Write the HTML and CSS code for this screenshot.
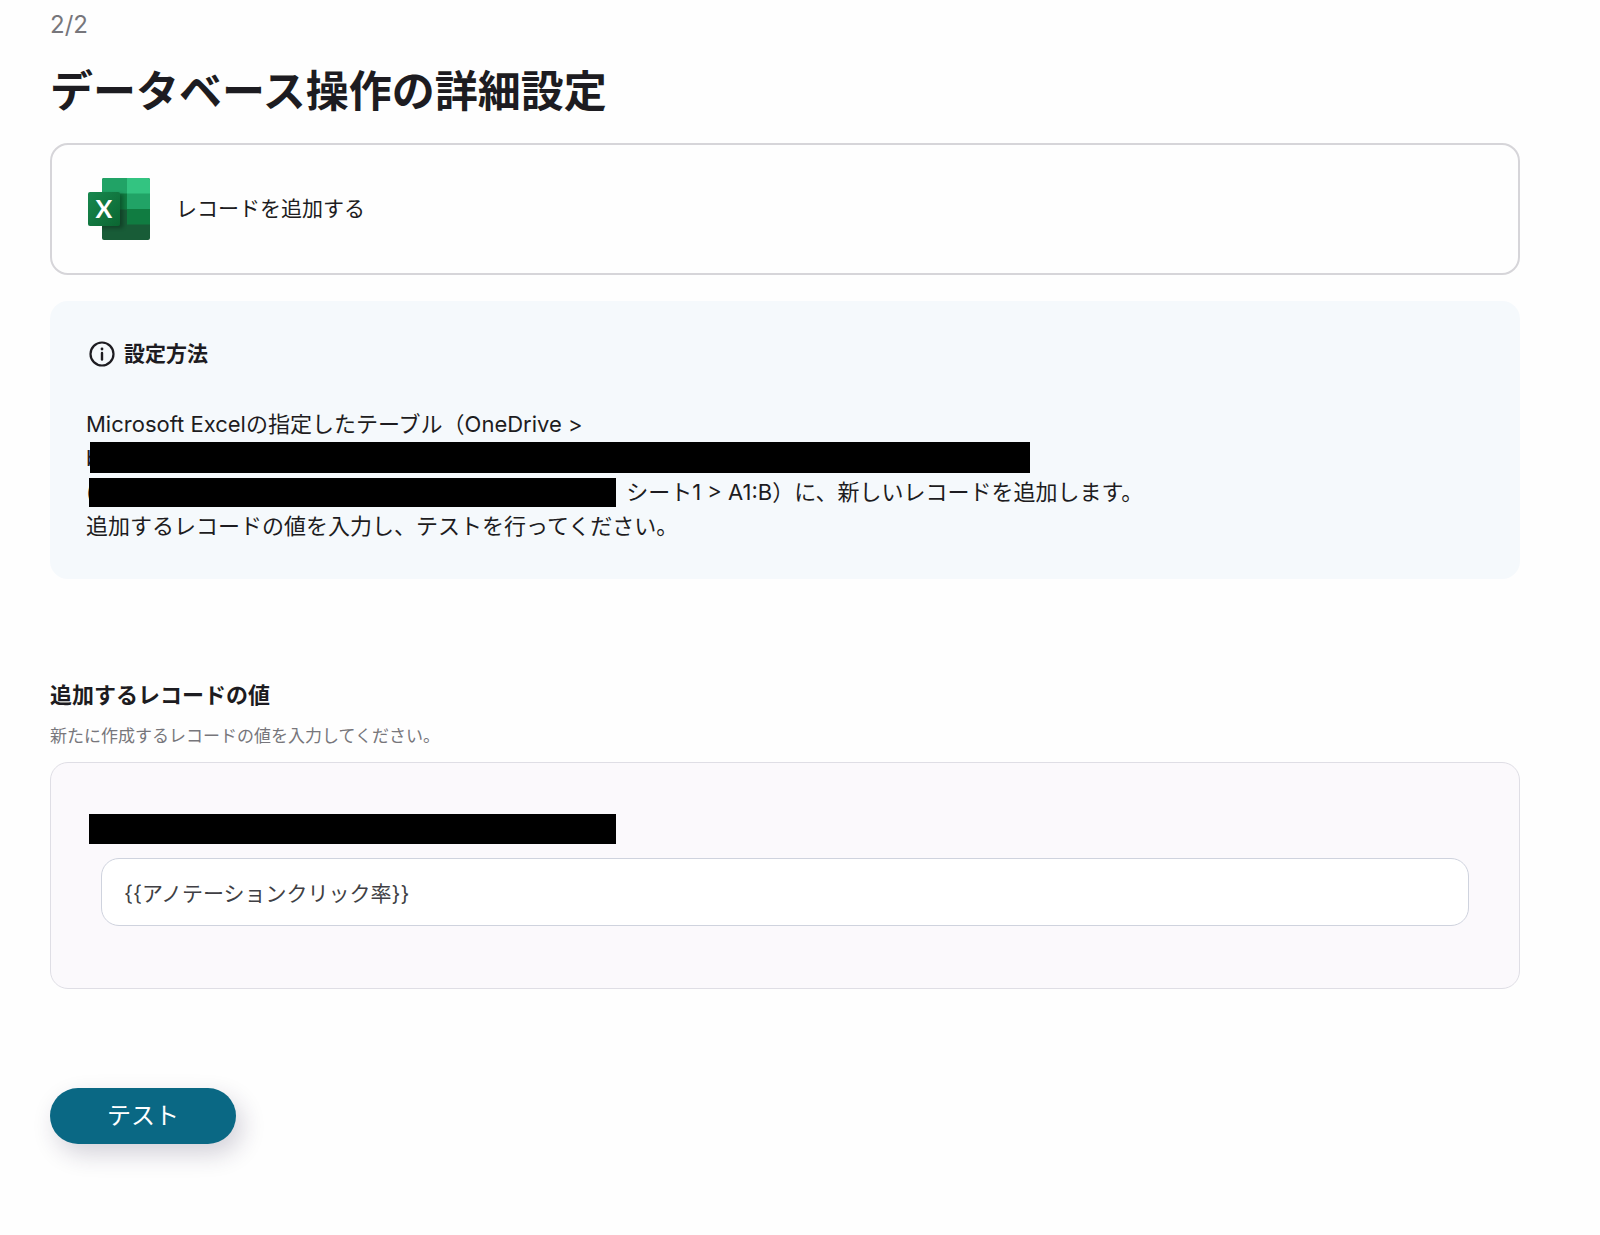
FILE: index.html
```html
<!DOCTYPE html>
<html lang="ja">
<head>
<meta charset="utf-8">
<meta name="viewport" content="width=device-width, initial-scale=1">
<title>データベース操作の詳細設定</title>
<link rel="stylesheet" href="styles.css">
</head>
<body>
<main class="page">
  <p class="step">2/2</p>
  <h1 class="title">データベース操作の詳細設定</h1>

  <section class="action-card">
    <svg class="excel-icon" viewBox="0 0 62 62" aria-hidden="true">
      <defs>
        <clipPath id="sheet"><rect x="14" y="0" width="48" height="62" rx="2"/></clipPath>
        <linearGradient id="badge" x1="0" y1="0" x2="1" y2="1">
          <stop offset="0" stop-color="#18884f"/>
          <stop offset="1" stop-color="#0b6631"/>
        </linearGradient>
        <filter id="soft" x="-30%" y="-30%" width="160%" height="160%"><feGaussianBlur stdDeviation="2"/></filter>
      </defs>
      <g clip-path="url(#sheet)">
        <rect x="14" width="48" height="62" fill="#185c37"/>
        <rect x="14" width="25" height="16" fill="#21a366"/>
        <rect x="39" width="23" height="16" fill="#33c481"/>
        <rect x="14" y="15.5" width="25" height="16" fill="#107c41"/>
        <rect x="39" y="15.5" width="23" height="16" fill="#21a366"/>
        <rect x="39" y="31" width="23" height="15.500" fill="#107c41"/>
        <rect x="4" y="16" width="31" height="34" fill="#000" opacity=".3" filter="url(#soft)"/>
      </g>
      <rect y="14" width="32" height="34" rx="2" fill="url(#badge)"/>
      <text class="excel-letter" x="16" y="40" text-anchor="middle">X</text>
    </svg>
    <span class="action-name">レコードを追加する</span>
  </section>

  <section class="guide">
    <h2 class="guide-title">
      <svg class="info-icon" viewBox="0 0 26 26" aria-hidden="true">
        <circle cx="13" cy="13" r="11.500" fill="none" stroke="currentColor" stroke-width="2.200"/>
        <circle cx="13" cy="8" r="1.400" fill="currentColor"/>
        <path d="M13 12v6.500" stroke="currentColor" stroke-width="2.400" stroke-linecap="round"/>
      </svg>
      設定方法
    </h2>
    <p class="guide-text">
      Microsoft Excelの指定したテーブル（OneDrive &gt;<br>
      <span class="redacted redacted-long">b</span><br>
      <span class="redacted redacted-short">(</span> シート1 &gt; A1:B）に、新しいレコードを追加します。<br>
      追加するレコードの値を入力し、テストを行ってください。
    </p>
  </section>

  <form class="record-form">
    <h2 class="form-title">追加するレコードの値</h2>
    <p class="form-hint">新たに作成するレコードの値を入力してください。</p>
    <div class="fields">
      <label class="field-label" for="record-value" aria-label="レコードの値"></label>
      <input class="field-input" id="record-value" type="text" value="{{アノテーションクリック率}}">
    </div>
    <button class="test-button" type="button">テスト</button>
  </form>
</main>
</body>
</html>
```

FILE: styles.css
```css
* {
  box-sizing: border-box;
}

body {
  margin: 0;
  background: #fefefe;
  color: #1d1c21;
  font-family: Inter, "Noto Sans CJK JP", sans-serif;
  font-size: 22px;
  line-height: 34px;
}

h1,
h2,
p {
  margin: 0;
}

.page {
  padding: 12px 80px 90px 50px;
}

.step {
  color: #77767b;
  font-size: 24px;
  line-height: 26px;
}

.title {
  margin-top: 26px;
  font-size: 43px;
  line-height: 54px;
}

.action-card {
  display: flex;
  align-items: center;
  gap: 26px;
  margin-top: 25px;
  padding: 33px 36px;
  border: 2px solid #d6d5d9;
  border-radius: 18px;
}

.excel-icon {
  width: 62px;
  height: 62px;
}

.excel-letter {
  fill: #fff;
  font: bold 25px Lato, sans-serif;
}

.action-name {
  font-size: 21px;
}

.guide {
  margin-top: 26px;
  padding: 36px;
  border-radius: 18px;
  background: #f5f9fc;
}

.guide-title {
  display: flex;
  align-items: center;
  gap: 9px;
  padding-left: 3px;
  font-size: 21px;
}

.info-icon {
  width: 26px;
  height: 26px;
}

.guide-text {
  margin-top: 36px;
}

.redacted {
  position: relative;
  display: inline-block;
  height: 34px;
  vertical-align: top;
}

.redacted::after {
  content: "";
  position: absolute;
  inset: 1px 0 2px 4px;
  background: #000;
}

.redacted-long {
  width: 944px;
}

.redacted-short {
  width: 530px;
  margin-right: 4px;
}

.redacted-short::after {
  inset: 3px 0 2px 3px;
}

.form-title {
  margin-top: 99px;
  font-size: 22px;
}

.form-hint {
  margin-top: 12px;
  color: #77767b;
  font-size: 17px;
  line-height: 24px;
}

.fields {
  margin-top: 14px;
  padding: 51px 50px 62px 38px;
  border: 1px solid #dfdee5;
  border-radius: 18px;
  background: #fbf9fc;
}

.field-label {
  display: block;
  max-width: 527px;
  height: 30px;
  background: #000;
}

.field-input {
  display: block;
  width: calc(100% - 12px);
  height: 68px;
  margin: 14px 0 0 12px;
  padding: 0 22px;
  border: 1px solid #cfd3de;
  border-radius: 18px;
  background: #fff;
  color: #403f44;
  font: inherit;
  font-size: 21px;
}

.test-button {
  display: block;
  min-width: 186px;
  height: 56px;
  margin-top: 99px;
  padding: 0 56px;
  border: 0;
  border-radius: 28px;
  background: #0a6884;
  box-shadow: 6px 10px 24px rgba(40, 30, 70, 0.2);
  color: #fff;
  font: inherit;
  font-size: 24px;
}
```
